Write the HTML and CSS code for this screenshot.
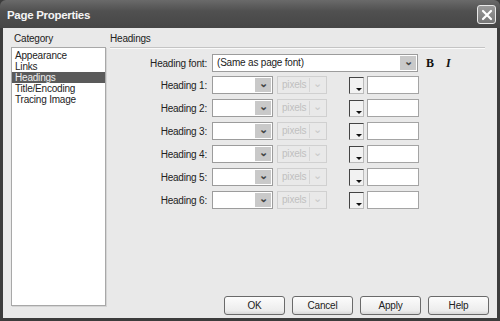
FILE: index.html
```html
<!DOCTYPE html>
<html lang="en">
<head>
  <meta charset="UTF-8">
  <title>Page Properties</title>
  <link rel="stylesheet" href="styles.css">
</head>
<body>

<div class="window">

  <!-- Title bar -->
  <div class="titlebar">
    <span class="title">Page Properties</span>
    <span class="close">
      <svg width="12" height="12" viewBox="0 0 12 12"><path d="M2 2 L10 10 M10 2 L2 10" stroke="#fff" stroke-width="2.2" stroke-linecap="round"/></svg>
    </span>
  </div>

  <div class="client">

    <!-- Category list -->
    <div class="category">
      <div class="label">Category</div>
      <ul class="list">
        <li>Appearance</li>
        <li>Links</li>
        <li class="selected">Headings</li>
        <li>Title/Encoding</li>
        <li>Tracing Image</li>
      </ul>
    </div>

    <!-- Panel -->
    <div class="panel">
      <div class="label">Headings</div>
      <div class="rule"></div>

      <div class="row font-row">
        <span class="row-label">Heading font:</span>
        <span class="select wide"><span class="value">(Same as page font)</span><span class="arrow">&#8964;</span></span>
        <span class="style-btn bold">B</span>
        <span class="style-btn italic">I</span>
      </div>

      <div class="row">
        <span class="row-label">Heading 1:</span>
        <span class="select size"><span class="value"></span><span class="arrow">&#8964;</span></span>
        <span class="select unit disabled"><span class="value">pixels</span><span class="arrow">&#8964;</span></span>
        <span class="swatch"></span>
        <span class="text-input"></span>
      </div>
      <div class="row">
        <span class="row-label">Heading 2:</span>
        <span class="select size"><span class="value"></span><span class="arrow">&#8964;</span></span>
        <span class="select unit disabled"><span class="value">pixels</span><span class="arrow">&#8964;</span></span>
        <span class="swatch"></span>
        <span class="text-input"></span>
      </div>
      <div class="row">
        <span class="row-label">Heading 3:</span>
        <span class="select size"><span class="value"></span><span class="arrow">&#8964;</span></span>
        <span class="select unit disabled"><span class="value">pixels</span><span class="arrow">&#8964;</span></span>
        <span class="swatch"></span>
        <span class="text-input"></span>
      </div>
      <div class="row">
        <span class="row-label">Heading 4:</span>
        <span class="select size"><span class="value"></span><span class="arrow">&#8964;</span></span>
        <span class="select unit disabled"><span class="value">pixels</span><span class="arrow">&#8964;</span></span>
        <span class="swatch"></span>
        <span class="text-input"></span>
      </div>
      <div class="row">
        <span class="row-label">Heading 5:</span>
        <span class="select size"><span class="value"></span><span class="arrow">&#8964;</span></span>
        <span class="select unit disabled"><span class="value">pixels</span><span class="arrow">&#8964;</span></span>
        <span class="swatch"></span>
        <span class="text-input"></span>
      </div>
      <div class="row">
        <span class="row-label">Heading 6:</span>
        <span class="select size"><span class="value"></span><span class="arrow">&#8964;</span></span>
        <span class="select unit disabled"><span class="value">pixels</span><span class="arrow">&#8964;</span></span>
        <span class="swatch"></span>
        <span class="text-input"></span>
      </div>

      <div class="buttons">
        <button>OK</button>
        <button>Cancel</button>
        <button>Apply</button>
        <button>Help</button>
      </div>
    </div>

  </div>
</div>

</body>
</html>
```

FILE: styles.css
```css
* {
  box-sizing: border-box;
  padding: 0;
  margin: 0;
}

body {
  font-family: "Liberation Sans", Arial, sans-serif;
  font-size: 10px;
  letter-spacing: -0.2px;
  color: #222;
  background: #333;
}

.window {
  width: 500px;
  height: 321px;
  display: flex;
  flex-direction: column;
  background: #3c3c3c;
  padding: 0 3px 3px 3px;
}

/* Title bar */
.titlebar {
  height: 28px;
  display: flex;
  align-items: center;
  justify-content: space-between;
  background: linear-gradient(#6a6a6a, #505050 40%, #464646);
  margin: 0 -3px;
  padding: 1px 3px 0 7px;
  border-radius: 6px 6px 0 0;
}

.title {
  color: #f4f4f4;
  font-weight: bold;
  font-size: 11.5px;
  letter-spacing: -0.3px;
}

.close {
  width: 19px;
  height: 19px;
  border: 1px solid #e8e8e8;
  border-radius: 3px;
  background: linear-gradient(#9a9a9a, #777);
  display: flex;
  align-items: center;
  justify-content: center;
  margin-right: 1px;
}

/* Client area */
.client {
  flex: 1;
  background: #e9e9e9;
  display: flex;
  padding: 5px 9px 0 8px;
}

.label {
  height: 14px;
  line-height: 12px;
  padding-left: 3px;
}

.category {
  width: 99px;
  display: flex;
  flex-direction: column;
  padding-bottom: 12px;
}

.list {
  list-style: none;
  flex: 1;
  background: #fff;
  border: 1px solid #a8a8a8;
  box-shadow: 1px 1px 0 #d4d4d4;
  width: 95px;
  padding-top: 2px;
}

.list li {
  height: 11px;
  line-height: 11px;
  padding-left: 3px;
}

.list li.selected {
  background: #5a5a5a;
  color: #eee;
}

/* Panel */
.panel {
  flex: 1;
  display: flex;
  flex-direction: column;
}

.panel > .label {
  padding-left: 0;
}

.rule {
  height: 2px;
  border-top: 1px solid #c4c4c4;
  border-bottom: 1px solid #fafafa;
  margin-right: 3px;
  margin-bottom: 5px;
}

.row {
  display: flex;
  align-items: center;
  height: 18px;
  margin-bottom: 5px;
}

.font-row {
  margin-bottom: 4px;
}

.row-label {
  width: 101px;
  text-align: right;
  padding-right: 4px;
  flex-shrink: 0;
}

.select {
  display: flex;
  height: 18px;
  background: #fff;
  border: 1px solid #9c9c9c;
}

.select .value {
  flex: 1;
  line-height: 16px;
  padding-left: 4px;
  white-space: nowrap;
}

.select .arrow {
  width: 16px;
  background: #c9c9c9;
  color: #444;
  text-align: center;
  font-size: 11px;
  font-weight: bold;
  line-height: 10px;
  margin: 1px;
}

.wide {
  width: 206px;
  margin-left: 1px;
}

.size {
  width: 61px;
  margin-left: 1px;
}

.unit {
  width: 50px;
  margin-left: 4px;
}

.disabled {
  border-color: #d0d0d0;
  background: #e9e9e9;
}

.disabled .value {
  color: #c0c0c0;
}

.disabled .arrow {
  background: #e9e9e9;
  color: #c8c8c8;
  border-left: 1px solid #d6d6d6;
  font-weight: normal;
}

.style-btn {
  font-family: "Liberation Serif", serif;
  font-weight: bold;
  font-size: 12px;
  color: #111;
  margin-left: 8px;
  width: 10px;
}

.italic {
  font-style: italic;
  margin-left: 10px;
}

.swatch {
  position: relative;
  width: 15px;
  height: 17px;
  margin-left: 22px;
  background: #f2f2f2;
  border-top: 1px solid #444;
  border-left: 1px solid #444;
  border-right: 1px solid #bbb;
  border-bottom: 1px solid #bbb;
}

.swatch::after {
  content: "";
  position: absolute;
  right: 1px;
  bottom: 2px;
  border-left: 3px solid transparent;
  border-right: 3px solid transparent;
  border-top: 3px solid #111;
}

.text-input {
  width: 52px;
  height: 18px;
  margin-left: 3px;
  background: #fff;
  border: 1px solid #a4a4a4;
}

/* Buttons */
.buttons {
  margin-top: auto;
  display: flex;
  justify-content: flex-end;
  gap: 7px;
  margin-bottom: 3px;
  margin-right: -1px;
}

button {
  width: 61px;
  height: 19px;
  font-family: "Liberation Sans", Arial, sans-serif;
  font-size: 10px;
  letter-spacing: -0.2px;
  color: #222;
  background: linear-gradient(#fcfcfc, #ececec 80%, #d8d8d8);
  border: 1px solid #6a6a6a;
  border-radius: 3px;
}
```
